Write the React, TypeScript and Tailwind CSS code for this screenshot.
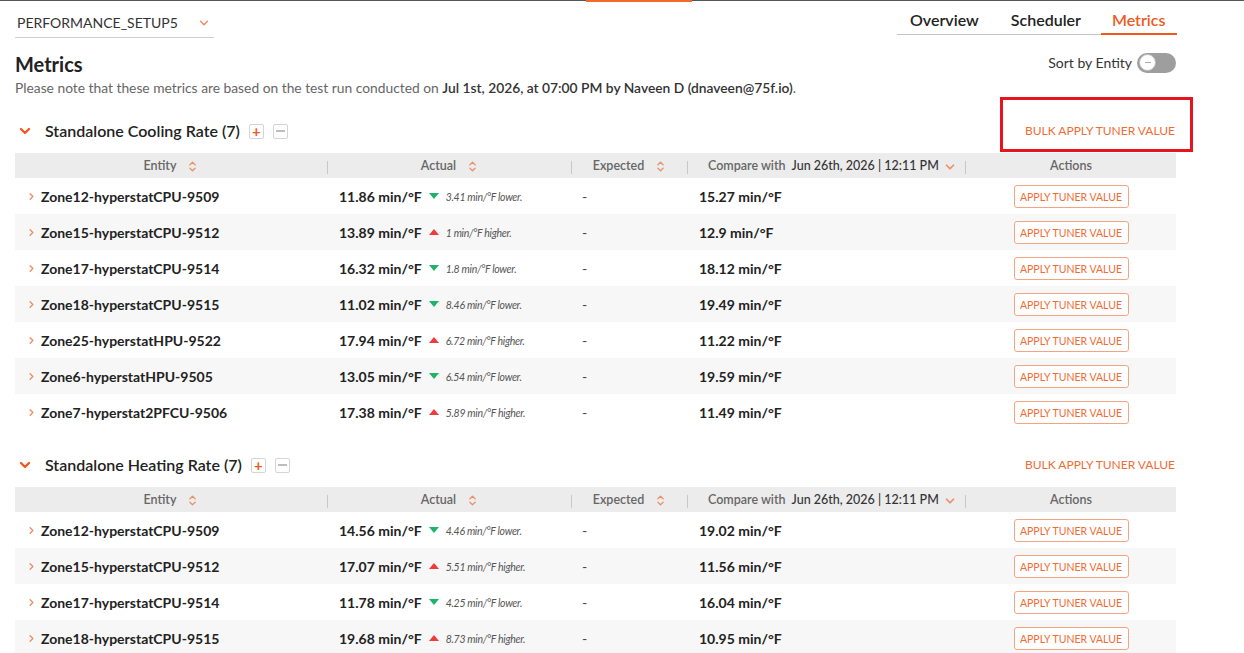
import { ChevronDown, ChevronRight, ChevronsUpDown } from 'lucide-react';

type Row = { name: string; actual: string; delta: string; up: boolean; compare: string };

const cooling: Row[] = [
  { name: 'Zone12-hyperstatCPU-9509', actual: '11.86', delta: '3.41', up: false, compare: '15.27' },
  { name: 'Zone15-hyperstatCPU-9512', actual: '13.89', delta: '1', up: true, compare: '12.9' },
  { name: 'Zone17-hyperstatCPU-9514', actual: '16.32', delta: '1.8', up: false, compare: '18.12' },
  { name: 'Zone18-hyperstatCPU-9515', actual: '11.02', delta: '8.46', up: false, compare: '19.49' },
  { name: 'Zone25-hyperstatHPU-9522', actual: '17.94', delta: '6.72', up: true, compare: '11.22' },
  { name: 'Zone6-hyperstatHPU-9505', actual: '13.05', delta: '6.54', up: false, compare: '19.59' },
  { name: 'Zone7-hyperstat2PFCU-9506', actual: '17.38', delta: '5.89', up: true, compare: '11.49' },
];

const heating: Row[] = [
  { name: 'Zone12-hyperstatCPU-9509', actual: '14.56', delta: '4.46', up: false, compare: '19.02' },
  { name: 'Zone15-hyperstatCPU-9512', actual: '17.07', delta: '5.51', up: true, compare: '11.56' },
  { name: 'Zone17-hyperstatCPU-9514', actual: '11.78', delta: '4.25', up: false, compare: '16.04' },
  { name: 'Zone18-hyperstatCPU-9515', actual: '19.68', delta: '8.73', up: true, compare: '10.95' },
];

function SortIcon() {
  return <ChevronsUpDown className="w-[13px] h-[13px] text-[#eb8f66]" strokeWidth={2.5} />;
}

function Sep() {
  return <span className="absolute right-0 top-[6px] h-[13px] w-px bg-[#c8c8c8]" />;
}

function Section({ title, rows, boxed }: { title: string; rows: Row[]; boxed?: boolean }) {
  return (
    <div>
      <div className="relative flex items-center h-[34px] mb-[5px]">
        <ChevronDown className="w-[16px] h-[16px] text-[#ef5a1c] ml-[2px]" strokeWidth={3.5} />
        <span className="ml-[12px] text-[16px] font-semibold text-[#222]">{title}</span>
        <span className="ml-[9px] w-[15px] h-[15px] border border-[#d4d4d4] rounded-[2px] flex items-center justify-center text-[#ef5a1c] text-[15px] leading-none font-bold">+</span>
        <span className="ml-[9px] w-[15px] h-[15px] border border-[#d4d4d4] rounded-[2px] flex items-center justify-center">
          <span className="w-[9px] h-[1.5px] bg-[#bdbdbd]" />
        </span>
        <span className="ml-auto mr-[1px] text-[12px] text-[#ef6c35]">BULK APPLY TUNER VALUE</span>
        {boxed && (
          <span className="absolute right-[-17px] top-[-17px] w-[193px] h-[55px] border-[3px] border-[#e8141c]" />
        )}
      </div>
      <div className="flex h-[25px] bg-[#ececec] text-[12.5px] font-semibold text-[#666] items-center pt-[2px]">
        <div className="relative w-[313px] h-full flex items-center justify-center gap-[10px]">
          Entity <SortIcon />
          <Sep />
        </div>
        <div className="relative w-[244px] h-full flex items-center justify-center gap-[10px]">
          Actual <SortIcon />
          <Sep />
        </div>
        <div className="relative w-[116px] h-full flex items-center justify-center gap-[10px]">
          Expected <SortIcon />
          <Sep />
        </div>
        <div className="relative w-[278px] h-full flex items-center pl-[20px]">
          Compare with
          <span className="ml-[6px] text-[#333] font-medium">Jun 26th, 2026 | 12:11 PM</span>
          <ChevronDown className="ml-[4px] w-[14px] h-[14px] text-[#eb8f66]" strokeWidth={3} />
          <Sep />
        </div>
        <div className="flex-1 h-full flex items-center justify-center">Actions</div>
      </div>
      {rows.map((r, i) => (
        <div key={r.name} className={`flex h-[36px] items-center ${i % 2 === 1 ? 'bg-[#f7f7f7]' : 'bg-white'}`}>
          <div className="w-[313px] flex items-center pl-[11px]">
            <ChevronRight className="w-[11px] h-[11px] text-[#eb8f66]" strokeWidth={3} />
            <span className="ml-[4px] text-[14px] font-bold text-[#222]">{r.name}</span>
          </div>
          <div className="w-[244px] flex items-center pl-[11px]">
            <span className="text-[14px] font-bold text-[#222]">{r.actual} min/°F</span>
            {r.up ? (
              <span className="ml-[7px] w-0 h-0 border-l-[5px] border-r-[5px] border-b-[6px] border-l-transparent border-r-transparent border-b-[#ef3b3b]" />
            ) : (
              <span className="ml-[7px] w-0 h-0 border-l-[5px] border-r-[5px] border-t-[6px] border-l-transparent border-r-transparent border-t-[#1db36b]" />
            )}
            <span className="ml-[7px] mt-[3px] text-[10.5px] italic text-[#555] tracking-[-0.3px]">
              {r.delta} min/°F {r.up ? 'higher.' : 'lower.'}
            </span>
          </div>
          <div className="w-[116px] pl-[10px] text-[14px] text-[#444]">-</div>
          <div className="w-[278px] pl-[11px] text-[14px] font-bold text-[#222]">{r.compare} min/°F</div>
          <div className="flex-1 flex justify-center">
            <button className="h-[23px] w-[115px] border border-[#f4a480] rounded-[3px] text-[10.5px] leading-none pt-[2px] text-[#ef6c35] bg-white">
              APPLY TUNER VALUE
            </button>
          </div>
        </div>
      ))}
    </div>
  );
}

export default function App() {
  return (
    <div className="relative w-[1244px] h-[653px] overflow-hidden bg-white font-['Lato','Noto_Sans',sans-serif]">
      <div className="flex h-[1px] bg-[#555]">
        <span className="ml-[586px] w-[106px] h-[2px] bg-[#f26a2a]" />
      </div>
      <div className="w-[1191px] px-[15px]">
        <div className="flex justify-between items-start pt-[7px]">
          <div className="w-[199px] h-[30px] border-b border-[#cfcfcf] flex items-center justify-between pl-[2px] pr-[3px]">
            <span className="text-[14px] text-[#333]">PERFORMANCE_SETUP5</span>
            <ChevronDown className="w-[14px] h-[14px] text-[#f08a64]" strokeWidth={2.5} />
          </div>
          <div className="flex border-b border-[#c4c4c4] w-[279px] pl-[12px]">
            <span className="px-[1px] pb-[2px] text-[16px] font-semibold text-[#222]">Overview</span>
            <span className="ml-[30px] px-[1px] pb-[2px] text-[16px] font-semibold text-[#222]">Scheduler</span>
            <span className="ml-[19px] px-[11px] pb-[1px] text-[16px] font-semibold text-[#ef5a1c] border-b-2 border-[#ef5a1c] -mb-px">Metrics</span>
          </div>
        </div>
        <div className="flex justify-between items-start mt-[13px]">
          <div>
            <div className="text-[20px] font-bold text-[#222] leading-[26px]">Metrics</div>
            <div className="text-[13.8px] text-[#666] leading-[20px] mt-[1px]">
              Please note that these metrics are based on the test run conducted on{' '}
              <span className="font-semibold text-[#333]">Jul 1st, 2026, at 07:00 PM by Naveen D (dnaveen@75f.io)</span>.
            </div>
          </div>
          <div className="flex items-center gap-[5px] mt-[1px]">
            <span className="text-[14px] text-[#333]">Sort by Entity</span>
            <span className="w-[39px] h-[20px] rounded-full bg-[#9e9e9e] flex items-center pl-[2px]">
              <span className="w-[17px] h-[17px] rounded-full bg-white border border-[#bbb] flex items-center justify-center">
                <span className="w-[6px] h-px bg-[#aaa]" />
              </span>
            </span>
          </div>
        </div>
        <div className="mt-[16px]">
          <Section title="Standalone Cooling Rate (7)" rows={cooling} boxed />
        </div>
        <div className="mt-[18px]">
          <Section title="Standalone Heating Rate (7)" rows={heating} />
        </div>
      </div>
    </div>
  );
}
